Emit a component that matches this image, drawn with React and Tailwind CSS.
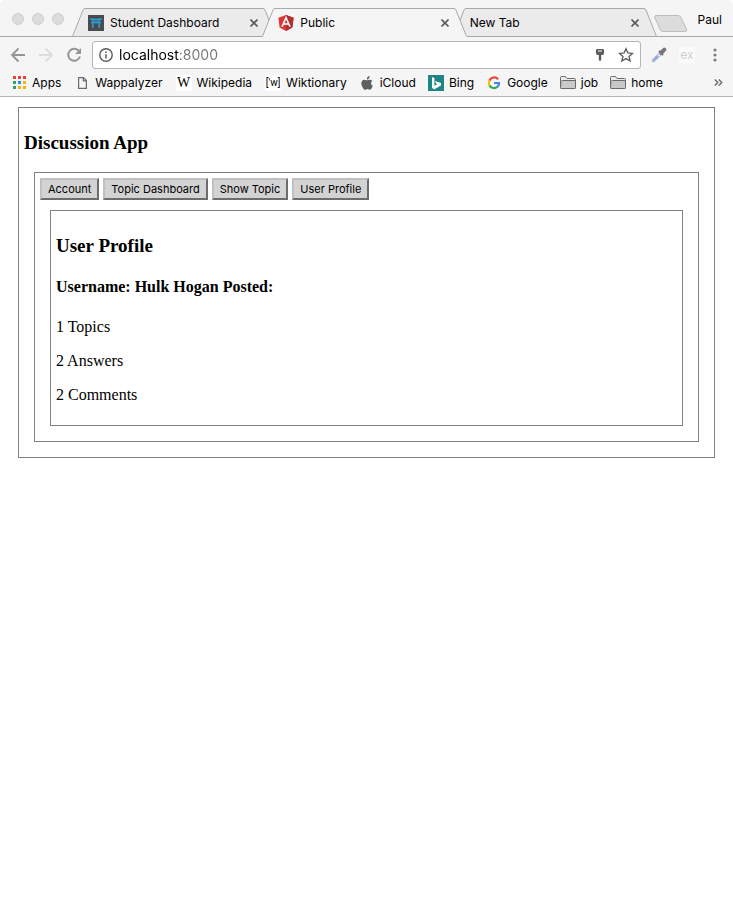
import React from "react";

function ToriiIcon() {
  return (
    <svg width="16" height="16" viewBox="0 0 16 16" className="shrink-0" aria-hidden="true">
      <rect width="16" height="16" fill="#4b4b4d" />
      <path d="M2 3 Q8 4.400 14 3 L13.500 4.900 Q8 5.600 2.500 4.900 Z" fill="#2a9fdc" />
      <path d="M3 7.500 H13 M5.400 5 L4.600 13 M10.600 5 L11.400 13" stroke="#2a9fdc" strokeWidth="1.500" fill="none" />
      <path d="M8 5 V7.500" stroke="#2a9fdc" fill="none" />
    </svg>
  );
}

function AngularIcon() {
  return (
    <svg width="16" height="16" viewBox="0 0 16 16" className="shrink-0" aria-hidden="true">
      <path d="M8 0 L15.600 2.700 L14.400 12.500 L8 16 L1.600 12.500 L0.400 2.700 Z" fill="#dd3735" />
      <path d="M8 0 L15.600 2.700 L14.400 12.500 L8 16 Z" fill="#b32f31" />
      <path d="M4 11.800 L8 2.800 L12 11.800 M5.600 9 H10.400" stroke="#fff" strokeWidth="1.600" fill="none" />
    </svg>
  );
}

function Tab({ title, icon, active }) {
  const fill = active ? "#f5f5f5" : "#ebebeb";
  return (
    <div className={active ? "relative z-10 -mr-[14px] flex h-[29px] min-w-0 flex-1" : "-mr-[14px] flex h-[29px] min-w-0 flex-1"}>
      <svg width="13" height="29" viewBox="0 0 13 29" className="shrink-0" aria-hidden="true">
        <path d="M0 29 L0.500 28 L11 2 Q11.600 0.500 13 0.500 V29 Z" fill={fill} />
        <path d="M0.500 28.500 L11 2 Q11.600 0.500 13 0.500" fill="none" stroke="#a9a9a9" />
        {!active && <path d="M0 28.500 H13" stroke="#a9a9a9" />}
      </svg>
      <div
        className={
          active
            ? "flex min-w-0 flex-1 items-center border-t border-[#a9a9a9] bg-[#f5f5f5] px-[3px]"
            : "flex min-w-0 flex-1 items-center border-y border-[#a9a9a9] bg-[#ebebeb] px-[3px]"
        }
      >
        {icon}
        <button type="button" className={icon ? "ml-1.5 min-w-0 flex-1 truncate text-left" : "ml-px min-w-0 flex-1 truncate text-left"}>
          {title}
        </button>
        <button type="button" aria-label={"Close " + title} className="flex size-3 items-center justify-center">
          <svg width="8" height="8" viewBox="0 0 8 8" aria-hidden="true">
            <path d="M0.500 0.500 L7.500 7.500 M7.500 0.500 L0.500 7.500" stroke="#5a5a5a" strokeWidth="1.600" />
          </svg>
        </button>
      </div>
      <svg width="13" height="29" viewBox="0 0 13 29" className="shrink-0" aria-hidden="true">
        <path d="M0 0.500 Q1.400 0.500 2 2 L12.500 28 L13 29 H0 Z" fill={fill} />
        <path d="M0 0.500 Q1.400 0.500 2 2 L12.500 28.500" fill="none" stroke="#a9a9a9" />
        {!active && <path d="M0 28.500 H13" stroke="#a9a9a9" />}
      </svg>
    </div>
  );
}

function TabStrip() {
  return (
    <div className="flex h-[37px] items-end rounded-t-md border-b border-[#a9a9a9] bg-[#f5f5f5]">
      <div className="flex w-[72px] shrink-0 gap-2 self-start pt-[13px] pl-3">
        <span className="size-3 rounded-full border border-[#cfcfcf] bg-[#dcdcdc]" />
        <span className="size-3 rounded-full border border-[#cfcfcf] bg-[#dcdcdc]" />
        <span className="size-3 rounded-full border border-[#cfcfcf] bg-[#dcdcdc]" />
      </div>
      <div className="-mb-px flex min-w-0 flex-1 pr-[14px]">
        <Tab title="Student Dashboard" icon={<ToriiIcon />} />
        <Tab title="Public" icon={<AngularIcon />} active />
        <Tab title="New Tab" />
      </div>
      <button type="button" aria-label="New tab" className="-ml-[3px] mb-1 shrink-0">
        <svg width="34" height="17" viewBox="0 0 34 17" aria-hidden="true">
          <path d="M2 0.500 H24 Q26 0.500 27 2.500 L32.500 14 Q33.500 16.500 31 16.500 H9 Q7 16.500 6 14.500 L0.800 2.500 Q0.200 0.500 2 0.500 Z" fill="#dcdcdc" stroke="#bdbdbd" />
        </svg>
      </button>
      <button type="button" className="w-[45px] shrink-0 self-start pt-3 pr-[11px] text-right">
        Paul
      </button>
    </div>
  );
}

function AddressBar() {
  return (
    <div className="flex h-8 items-center pt-1 pr-4 pl-[10px]">
      <button type="button" aria-label="Back" className="mr-3">
        <svg width="16" height="16" viewBox="0 0 16 16" fill="none" stroke="#959595" strokeWidth="1.800" aria-hidden="true">
          <path d="M15 8 H2 M8.500 1.500 L2 8 L8.500 14.500" />
        </svg>
      </button>
      <button type="button" aria-label="Forward" className="mr-3">
        <svg width="16" height="16" viewBox="0 0 16 16" fill="none" stroke="#dcdcdc" strokeWidth="1.800" aria-hidden="true">
          <path d="M1 8 H14 M7.500 1.500 L14 8 L7.500 14.500" />
        </svg>
      </button>
      <button type="button" aria-label="Reload" className="mr-2.5">
        <svg width="16" height="16" viewBox="0 0 16 16" fill="none" aria-hidden="true">
          <path d="M13.300 4.500 A6 6 0 1 0 14 9.500" stroke="#959595" strokeWidth="2" />
          <path d="M15 1 V7 H9 Z" fill="#959595" />
        </svg>
      </button>
      <div className="flex h-7 min-w-0 flex-1 items-center rounded-[3px] border border-[#b5b5b5] bg-white px-1.5">
        <svg width="14" height="14" viewBox="0 0 14 14" className="shrink-0" fill="none" aria-hidden="true">
          <circle cx="7" cy="7" r="6.200" stroke="#5a5a5a" strokeWidth="1.400" />
          <path d="M7 6.200 V10.500 M7 3.500 V5" stroke="#5a5a5a" strokeWidth="1.500" />
        </svg>
        <input
          type="text"
          aria-label="Address"
          defaultValue="localhost:8000"
          className="ml-1.5 min-w-0 flex-1 bg-[linear-gradient(90deg,#000_60px,#757575_60px)] bg-clip-text text-sm text-transparent outline-none"
        />
        <button type="button" aria-label="Saved passwords" className="mr-[13px]">
          <svg width="10" height="12" viewBox="0 0 10 12" aria-hidden="true">
            <path d="M2 0 H8 Q9 0 9 1 V4 Q9 6 7.500 6 H6.200 V11 L5 12 L3.800 11 V6 H2.500 Q1 6 1 4 V1 Q1 0 2 0 Z" fill="#5c5c5c" />
            <path d="M3 2 H7" stroke="#fff" />
          </svg>
        </button>
        <button type="button" aria-label="Bookmark this page">
          <svg width="16" height="16" viewBox="0 0 16 16" aria-hidden="true">
            <path d="M8 1.700 L9.900 6 L14.500 6.400 L11 9.500 L12.100 14 L8 11.600 L3.900 14 L5 9.500 L1.500 6.400 L6.100 6 Z" fill="none" stroke="#5c5c5c" strokeWidth="1.300" />
          </svg>
        </button>
      </div>
      <button type="button" aria-label="Color picker" className="ml-2.5">
        <svg width="16" height="16" viewBox="0 0 16 16" fill="none" aria-hidden="true">
          <path d="M2.500 13.500 L9 7" stroke="#b4b4be" strokeWidth="3.400" strokeLinecap="round" />
          <path d="M2.800 13.200 L8.500 7.500" stroke="#e4e8fb" strokeWidth="2" />
          <path d="M2.800 13.200 L7 9" stroke="#8da3ee" strokeWidth="2" />
          <path d="M8 4 L12 8" stroke="#707074" strokeWidth="2" />
          <path d="M10.500 5.500 L13.300 2.700" stroke="#77777b" strokeWidth="4" strokeLinecap="round" />
        </svg>
      </button>
      <button type="button" className="ml-3 h-4 w-4 bg-[#fafafa] text-xs leading-4 text-[#d0d0d0]">
        ex
      </button>
      <button type="button" aria-label="Menu" className="ml-[18px]">
        <svg width="4" height="14" viewBox="0 0 4 14" fill="#7d7d7d" aria-hidden="true">
          <circle cx="2" cy="2" r="1.600" />
          <circle cx="2" cy="7" r="1.600" />
          <circle cx="2" cy="12" r="1.600" />
        </svg>
      </button>
    </div>
  );
}

function AppsIcon() {
  const colors = ["#ea4335", "#ea4335", "#ea4335", "#34a065", "#2a8cf0", "#f5b400", "#34a065", "#f5b400", "#f5b400"];
  return (
    <svg width="13" height="13" viewBox="0 0 13 13" aria-hidden="true">
      {colors.map((c, i) => (
        <rect key={i} x={(i % 3) * 5} y={Math.floor(i / 3) * 5} width="3" height="3" fill={c} />
      ))}
    </svg>
  );
}

function PageIcon() {
  return (
    <svg width="9" height="12" viewBox="0 0 9 12" fill="none" stroke="#6b6b6b" strokeWidth="1.200" aria-hidden="true">
      <path d="M0.600 0.600 H5.500 L8.400 3.500 V11.400 H0.600 Z M5.300 0.600 V3.800 H8.400" />
    </svg>
  );
}

function AppleIcon() {
  return (
    <svg width="12" height="14" viewBox="0 0 12 14" fill="#5f5f5f" aria-hidden="true">
      <path d="M8.500 0 Q8.700 1.500 7.800 2.500 Q7 3.500 5.900 3.400 Q5.800 2 6.600 1.100 Q7.400 0.200 8.500 0 Z" />
      <path d="M11.300 4.900 Q10 5.800 10 7.300 Q10 9.100 11.800 9.900 Q10.500 13.500 8.800 13.700 Q8 13.700 7.300 13.300 Q6.200 12.900 5.200 13.400 Q3.800 14.100 2.800 13.200 Q0.200 10.500 0.300 7.300 Q0.600 4 3.500 3.800 Q4.500 3.800 5.300 4.200 Q6 4.500 7 4 Q9.800 3.100 11.300 4.900 Z" />
    </svg>
  );
}

function BingIcon() {
  return (
    <svg width="16" height="16" viewBox="0 0 16 16" aria-hidden="true">
      <rect width="16" height="16" fill="#1f8484" />
      <path d="M4 2 L6.400 2.900 V10.800 L9.300 9.200 L8 8.500 L7 6 L13 8 V10.600 L6.400 14.300 L4 12.900 Z" fill="#fff" />
    </svg>
  );
}

function GoogleIcon() {
  return (
    <svg width="14" height="14" viewBox="0 0 14 14" fill="none" strokeWidth="2.200" aria-hidden="true">
      <path d="M11 3.300 A5 5 0 0 0 2.500 4.600" stroke="#ea4335" />
      <path d="M2.500 4.600 A5 5 0 0 0 2.500 9.400" stroke="#fbbc05" />
      <path d="M2.500 9.400 A5 5 0 0 0 10.300 10.800" stroke="#34a853" />
      <path d="M10.300 10.800 Q12 9.500 12 7 H7" stroke="#4285f4" />
    </svg>
  );
}

function FolderIcon() {
  return (
    <svg width="16" height="13" viewBox="0 0 16 13" aria-hidden="true">
      <path d="M0.500 11 V1.500 Q0.500 0.500 1.500 0.500 H5.500 L7 2.500 H14.500 Q15.500 2.500 15.500 3.500 V11.500 Q15.500 12.500 14.500 12.500 H1.500 Q0.500 12.500 0.500 11.500 Z" fill="#ececec" stroke="#6a6a6a" />
      <path d="M1 5.500 Q1.500 4.500 2.500 4.500 H15.500 V11.500 Q15.500 12.500 14.500 12.500 H1.500 Q0.500 12.500 0.500 11.500 Z" fill="#c9c9c9" stroke="#6a6a6a" />
    </svg>
  );
}

function Bookmark({ icon, children }) {
  return (
    <a href="#" className="flex shrink-0 items-center whitespace-nowrap">
      <span className="mr-[5px] flex w-4 shrink-0 items-center justify-center">{icon}</span>
      {children}
    </a>
  );
}

function BookmarksBar() {
  return (
    <nav className="flex h-7 items-center justify-between border-b border-[#b5b5b5] pr-2.5 pl-[11px]">
      <div className="flex gap-3">
        <div className="flex gap-[13px]">
          <Bookmark icon={<AppsIcon />}>Apps</Bookmark>
          <Bookmark icon={<PageIcon />}>Wappalyzer</Bookmark>
          <Bookmark icon={<span className="w-4 rounded-xs bg-white text-center font-['Liberation_Serif',serif] text-sm leading-4">W</span>}>Wikipedia</Bookmark>
          <Bookmark icon={<span className="w-4 rounded-xs bg-white text-center font-[Roboto,sans-serif] text-[10px] leading-4">['w]</span>}>Wiktionary</Bookmark>
        </div>
        <Bookmark icon={<AppleIcon />}>iCloud</Bookmark>
        <Bookmark icon={<BingIcon />}>Bing</Bookmark>
        <Bookmark icon={<GoogleIcon />}>Google</Bookmark>
        <Bookmark icon={<FolderIcon />}>job</Bookmark>
        <Bookmark icon={<FolderIcon />}>home</Bookmark>
      </div>
      <button type="button" aria-label="More bookmarks">
        <svg width="9" height="7" viewBox="0 0 9 7" fill="none" stroke="#6a6a6a" strokeWidth="1.400" aria-hidden="true">
          <path d="M0.800 0.500 L3.800 3.500 L0.800 6.500 M4.800 0.500 L7.800 3.500 L4.800 6.500" />
        </svg>
      </button>
    </nav>
  );
}

function NavButton({ children }) {
  return (
    <button
      type="button"
      className="h-[22px] border-2 border-t-[#c0c0c0] border-r-[#6c6c6c] border-b-[#6c6c6c] border-l-[#c0c0c0] bg-[#d3d3d3] px-1.5 font-[Inter,sans-serif] text-[11px] leading-4"
    >
      {children}
    </button>
  );
}

export default function App() {
  return (
    <div className="min-h-screen bg-white text-black">
      <header className="rounded-t-md bg-[#f5f5f5] font-[Inter,sans-serif] text-xs">
        <TabStrip />
        <AddressBar />
        <BookmarksBar />
      </header>
      <main className="mx-[18px] mt-[10px] border border-[#808080] p-[5px] pb-[15px] font-['Liberation_Serif',serif] text-base leading-[18px]">
        <h1 className="mt-[19px] mb-[18px] text-[19px] leading-[22px] font-bold">Discussion App</h1>
        <div className="mx-[10px] border border-[#808080] p-[5px] pb-[15px]">
          <nav className="flex flex-wrap gap-1">
            <NavButton>Account</NavButton>
            <NavButton>Topic Dashboard</NavButton>
            <NavButton>Show Topic</NavButton>
            <NavButton>User Profile</NavButton>
          </nav>
          <section className="mx-[10px] mt-[10px] border border-[#808080] px-[5px] pt-6 pb-[21px]">
            <h2 className="text-[19px] leading-[22px] font-bold">User Profile</h2>
            <h3 className="mt-[21px] mb-[22px] font-bold">Username: Hulk Hogan Posted:</h3>
            <div className="flex flex-col gap-4">
              <p>1 Topics</p>
              <p>2 Answers</p>
              <p>2 Comments</p>
            </div>
          </section>
        </div>
      </main>
    </div>
  );
}
